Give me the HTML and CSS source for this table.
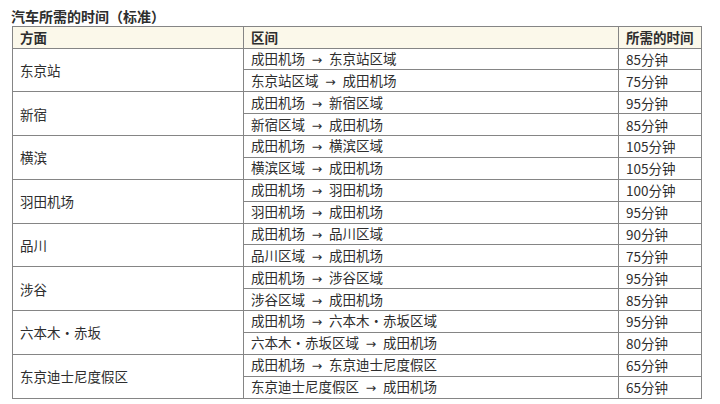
FILE: index.html
```html
<!DOCTYPE html>
<html lang="zh">
<head>
<meta charset="utf-8">
<link rel="stylesheet" href="styles.css">
</head>
<body>
<div class="page">
  <div class="title">汽车所需的时间（标准）</div>
  <table class="times">
    <colgroup><col class="c1"><col class="c2"><col class="c3"></colgroup>
    <thead>
      <tr><th>方面</th><th>区间</th><th>所需的时间</th></tr>
    </thead>
    <tbody>
      <tr><td rowspan="2">东京站</td><td>成田机场<span class="ar">→</span>东京站区域</td><td>85分钟</td></tr>
      <tr><td>东京站区域<span class="ar">→</span>成田机场</td><td>75分钟</td></tr>
      <tr><td rowspan="2">新宿</td><td>成田机场<span class="ar">→</span>新宿区域</td><td>95分钟</td></tr>
      <tr><td>新宿区域<span class="ar">→</span>成田机场</td><td>85分钟</td></tr>
      <tr><td rowspan="2">横滨</td><td>成田机场<span class="ar">→</span>横滨区域</td><td>105分钟</td></tr>
      <tr><td>横滨区域<span class="ar">→</span>成田机场</td><td>105分钟</td></tr>
      <tr><td rowspan="2">羽田机场</td><td>成田机场<span class="ar">→</span>羽田机场</td><td>100分钟</td></tr>
      <tr><td>羽田机场<span class="ar">→</span>成田机场</td><td>95分钟</td></tr>
      <tr><td rowspan="2">品川</td><td>成田机场<span class="ar">→</span>品川区域</td><td>90分钟</td></tr>
      <tr><td>品川区域<span class="ar">→</span>成田机场</td><td>75分钟</td></tr>
      <tr><td rowspan="2">涉谷</td><td>成田机场<span class="ar">→</span>涉谷区域</td><td>95分钟</td></tr>
      <tr><td>涉谷区域<span class="ar">→</span>成田机场</td><td>85分钟</td></tr>
      <tr><td rowspan="2">六本木・赤坂</td><td>成田机场<span class="ar">→</span>六本木・赤坂区域</td><td>95分钟</td></tr>
      <tr><td>六本木・赤坂区域<span class="ar">→</span>成田机场</td><td>80分钟</td></tr>
      <tr><td rowspan="2">东京迪士尼度假区</td><td>成田机场<span class="ar">→</span>东京迪士尼度假区</td><td>65分钟</td></tr>
      <tr><td>东京迪士尼度假区<span class="ar">→</span>成田机场</td><td>65分钟</td></tr>
    </tbody>
  </table>
</div>
</body>
</html>
```
FILE: styles.css
```css
html, body {
  margin: 0;
  padding: 0;
  background: #ffffff;
}
body {
  font-family: "Noto Sans CJK SC", "Noto Sans", sans-serif;
  color: #2e2e2e;
}
.page {
  padding: 6px 0 0 11px;
}
.title {
  font-size: 14px;
  font-weight: bold;
  line-height: 20px;
  height: 20px;
  color: #2e2e2e;
}
.times {
  border-collapse: collapse;
  width: 689px;
  margin-top: 0;
  margin-left: 1px;
  font-size: 13.5px;
  table-layout: fixed;
}
.c1 { width: 231px; }
.c2 { width: 375px; }
.c3 { width: 83px; }
.times th, .times td {
  border: 1px solid #858585;
  padding: 0 0 0 7px;
  text-align: left;
  line-height: 16px;
  white-space: nowrap;
  overflow: hidden;
}
.times th {
  background: #fbf8ea;
  font-weight: bold;
  height: 20.5px;
}
.times td {
  font-weight: normal;
  height: 20.875px;
}
.ar {
  display: inline-block;
  width: 24px;
  text-align: center;
  font-family: "DejaVu Sans", sans-serif;
  font-size: 12.5px;
}
```
